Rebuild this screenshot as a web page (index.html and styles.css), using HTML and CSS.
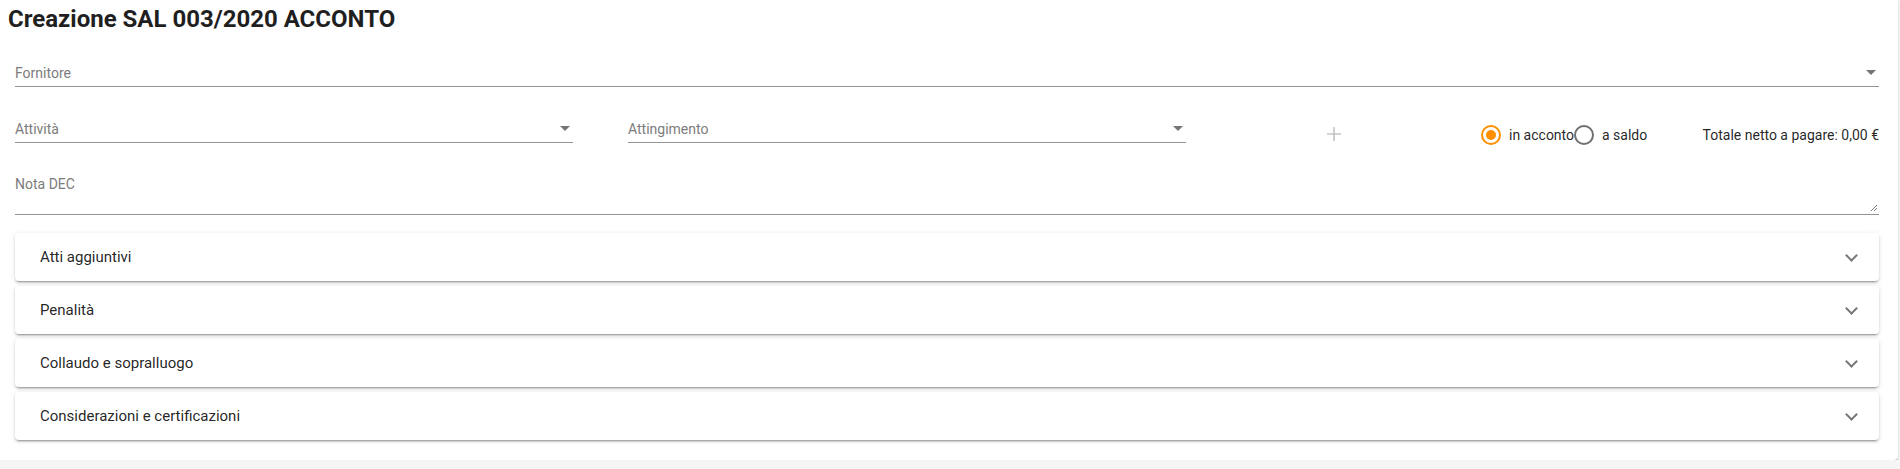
FILE: index.html
```html
<!DOCTYPE html>
<html lang="it">
<head>
  <meta charset="UTF-8">
  <meta name="viewport" content="width=device-width, initial-scale=1.0">
  <title>Creazione SAL</title>
  <link rel="stylesheet" href="styles.css">
</head>
<body>
  <div class="card">
    <h1 class="title">Creazione SAL 003/2020 ACCONTO</h1>

    <div class="form">
      <div class="field field-full">
        <span class="label">Fornitore</span>
        <span class="arrow"></span>
      </div>

      <div class="row">
        <div class="field field-half">
          <span class="label">Attività</span>
          <span class="arrow"></span>
        </div>
        <div class="field field-half">
          <span class="label">Attingimento</span>
          <span class="arrow"></span>
        </div>
        <button class="add-btn" type="button">
          <svg width="16" height="16" viewBox="0 0 16 16">
            <path d="M8 1v14M1 8h14" stroke="#c4c4c4" stroke-width="1.6" fill="none"/>
          </svg>
        </button>
        <div class="radios">
          <label class="radio checked"><span class="circle"></span>in acconto</label>
          <label class="radio"><span class="circle"></span>a saldo</label>
        </div>
        <div class="total">Totale netto a pagare: 0,00 €</div>
      </div>

      <div class="field field-full field-area">
        <span class="label">Nota DEC</span>
        <svg class="resize" width="8" height="8" viewBox="0 0 8 8">
          <path d="M1 7L7 1M4 7L7 4" stroke="#7a7a7a" stroke-width="1" fill="none"/>
        </svg>
      </div>

      <div class="panels">
        <div class="panel"><span>Atti aggiuntivi</span><span class="chevron"></span></div>
        <div class="panel"><span>Penalità</span><span class="chevron"></span></div>
        <div class="panel"><span>Collaudo e sopralluogo</span><span class="chevron"></span></div>
        <div class="panel"><span>Considerazioni e certificazioni</span><span class="chevron"></span></div>
      </div>
    </div>
  </div>
</body>
</html>
```

FILE: styles.css
```css
body {
  margin: 0;
  background-color: #f5f5f5;
  font-family: Roboto, "Helvetica Neue", sans-serif;
  color: rgba(0, 0, 0, 0.87);
}

.card {
  background: #fff;
  margin-right: 2px;
  padding: 3px 19px 20px 0;
  border-radius: 0 0 4px 0;
  box-shadow: 0 2px 1px -1px rgba(0,0,0,.2), 0 1px 1px 0 rgba(0,0,0,.14), 0 1px 3px 0 rgba(0,0,0,.12);
}

.title {
  margin: 0;
  padding-left: 8px;
  font-size: 24px;
  line-height: 32px;
  font-weight: 700;
  color: #1f1f1f;
}

.form {
  padding-left: 15px;
  margin-top: 28px;
}

.field {
  position: relative;
  border-bottom: 1px solid #949494;
  padding-bottom: 3px;
}

.label {
  display: block;
  font-size: 14px;
  line-height: 20px;
  color: #7c7c7c;
}

.arrow {
  position: absolute;
  right: 3px;
  top: 7px;
  width: 0;
  height: 0;
  border-left: 5px solid transparent;
  border-right: 5px solid transparent;
  border-top: 5px solid #757575;
}

.row {
  display: flex;
  align-items: flex-start;
  height: 25px;
  margin-top: 31px;
}

.field-half {
  width: 558px;
  padding-top: 1px;
  padding-bottom: 3px;
  margin-right: 55px;
}

.field-half:nth-child(2) {
  margin-right: 0;
}

.field-half .arrow {
  top: 8px;
}

.add-btn {
  margin: 4px 0 0 128px;
  width: 40px;
  height: 24px;
  padding: 0;
  border: none;
  background: none;
  display: flex;
  align-items: center;
  justify-content: center;
}

.radios {
  display: flex;
  margin: 7px 0 0 127px;
}

.radio {
  display: flex;
  align-items: center;
  gap: 8px;
  font-size: 14px;
  line-height: 20px;
  color: rgba(0, 0, 0, 0.87);
}

.circle {
  box-sizing: border-box;
  width: 20px;
  height: 20px;
  border: 2px solid #6f6f6f;
  border-radius: 50%;
  position: relative;
}

.radio.checked .circle {
  border-color: #ff8f00;
}

.radio.checked .circle::after {
  content: "";
  position: absolute;
  left: 3px;
  top: 3px;
  width: 10px;
  height: 10px;
  border-radius: 50%;
  background: #ff8f00;
}

.total {
  margin-left: auto;
  margin-top: 7px;
  font-size: 14px;
  line-height: 20px;
}

.field-area {
  margin-top: 31px;
  padding-bottom: 20px;
}

.resize {
  position: absolute;
  right: 1px;
  bottom: 2px;
}

.panels {
  margin-top: 18px;
  display: flex;
  flex-direction: column;
  gap: 5px;
}

.panel {
  height: 48px;
  display: flex;
  align-items: center;
  justify-content: space-between;
  padding: 0 22px 0 25px;
  background: #fff;
  border-radius: 4px;
  font-size: 15px;
  color: rgba(0, 0, 0, 0.87);
  box-shadow: 0 3px 1px -2px rgba(0,0,0,.2), 0 2px 2px 0 rgba(0,0,0,.14), 0 1px 5px 0 rgba(0,0,0,.12);
}

.chevron {
  width: 7px;
  height: 7px;
  border-right: 2px solid #767676;
  border-bottom: 2px solid #767676;
  transform: rotate(45deg);
  margin: -4px 1px 0 0;
}
```
